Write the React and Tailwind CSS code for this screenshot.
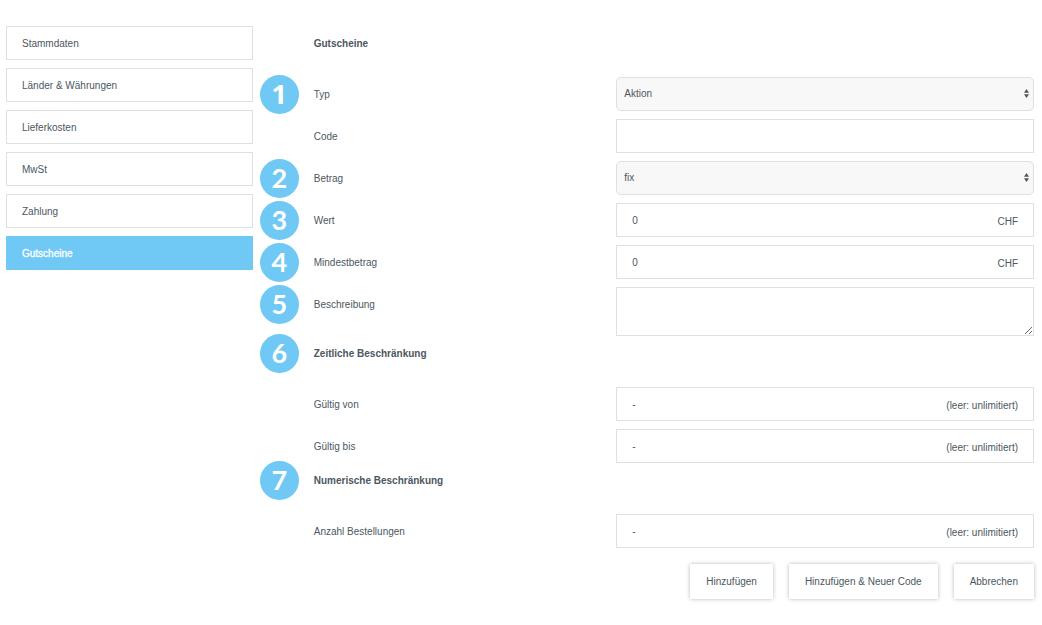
import clsx from 'clsx';

const navItems = ['Stammdaten', 'Länder & Währungen', 'Lieferkosten', 'MwSt', 'Zahlung', 'Gutscheine'];

function Sidebar({ active }) {
  return (
    <nav className="flex w-[24%] shrink-0 flex-col gap-2">
      {navItems.map((item) => (
        <a
          key={item}
          href="#"
          className={clsx(
            'flex h-[34px] items-center border px-[15px] pt-0.5',
            item === active ? 'border-[#70c9f4] bg-[#70c9f4] text-white [-webkit-text-stroke:0.3px_white]' : 'border-[#dfe0e1] bg-white'
          )}
        >
          {item}
        </a>
      ))}
    </nav>
  );
}

function Step({ number }) {
  return (
    <div className="mr-[15px] flex h-[34px] w-[39px] shrink-0 items-center">
      {number && (
        <span
          className={clsx(
            'flex size-[39px] shrink-0 items-center justify-center rounded-full bg-[#70c9f4] pb-0.5 text-[27px] leading-none font-bold text-white',
            number === 1 ? "font-['Open_Sans',sans-serif]" : 'font-[Lato,sans-serif]'
          )}
        >
          {number}
        </span>
      )}
    </div>
  );
}

function Heading({ step, children }) {
  return (
    <div className="mb-[17px] flex">
      <Step number={step} />
      <h2 className="flex h-[34px] items-center pt-0.5 font-bold">{children}</h2>
    </div>
  );
}

function Row({ step, id, label, children }) {
  return (
    <div className="flex">
      <Step number={step} />
      <div className="grid flex-1 grid-cols-[42fr_58fr]">
        <label htmlFor={id} className="flex h-[34px] items-center pt-0.5">
          {label}
        </label>
        {children}
      </div>
    </div>
  );
}

function SelectField({ id, options }) {
  return (
    <div className="relative">
      <select id={id} className="h-[34px] w-full appearance-none rounded-[5px] border border-[#dfe0e1] bg-[#f8f8f8] px-[7px] outline-none">
        {options.map((option) => (
          <option key={option}>{option}</option>
        ))}
      </select>
      <svg className="pointer-events-none absolute top-3 right-[5px] h-[9px] w-[5px]" viewBox="0 0 5 9" fill="currentColor">
        <path d="M2.5 0 L5 3.7 H0 Z" />
        <path d="M2.5 9 L5 5.3 H0 Z" />
      </svg>
    </div>
  );
}

function TextField({ id, value, suffix }) {
  return (
    <div className="flex h-[34px] items-center border border-[#dfe0e1] px-[15px]">
      <input id={id} type="text" defaultValue={value} className="h-full min-w-0 flex-1 outline-none" />
      {suffix && <span className="pt-1">{suffix}</span>}
    </div>
  );
}

function Button({ type = 'button', children }) {
  return (
    <button type={type} className="h-[35px] bg-white px-4 shadow-[0_0_4px_rgba(0,0,0,0.28)]">
      {children}
    </button>
  );
}

export default function App() {
  return (
    <div className="flex gap-[7px] bg-white pt-[26px] pr-2 pb-[26px] pl-[6px] font-['Liberation_Sans',Arial,sans-serif] text-[10px] leading-4 text-[#4c5761]">
      <Sidebar active="Gutscheine" />

      <form className="min-w-0 flex-1">
        <Heading>Gutscheine</Heading>
        <div className="flex flex-col gap-2">
          <Row step={1} id="typ" label="Typ">
            <SelectField id="typ" options={['Aktion']} />
          </Row>
          <Row id="code" label="Code">
            <TextField id="code" />
          </Row>
          <Row step={2} id="betrag" label="Betrag">
            <SelectField id="betrag" options={['fix']} />
          </Row>
          <Row step={3} id="wert" label="Wert">
            <TextField id="wert" value="0" suffix="CHF" />
          </Row>
          <Row step={4} id="mindestbetrag" label="Mindestbetrag">
            <TextField id="mindestbetrag" value="0" suffix="CHF" />
          </Row>
          <Row step={5} id="beschreibung" label="Beschreibung">
            <textarea id="beschreibung" className="block h-[49px] w-full resize-y border border-[#dfe0e1] px-[15px] py-2 outline-none" />
          </Row>
        </div>

        <Heading step={6}>Zeitliche Beschränkung</Heading>
        <div className="flex flex-col gap-2">
          <Row id="von" label="Gültig von">
            <TextField id="von" value="-" suffix="(leer: unlimitiert)" />
          </Row>
          <Row id="bis" label="Gültig bis">
            <TextField id="bis" value="-" suffix="(leer: unlimitiert)" />
          </Row>
        </div>

        <Heading step={7}>Numerische Beschränkung</Heading>
        <Row id="anzahl" label="Anzahl Bestellungen">
          <TextField id="anzahl" value="-" suffix="(leer: unlimitiert)" />
        </Row>

        <div className="mt-4 flex justify-end gap-4">
          <Button type="submit">Hinzufügen</Button>
          <Button type="submit">Hinzufügen &amp; Neuer Code</Button>
          <Button>Abbrechen</Button>
        </div>
      </form>
    </div>
  );
}
